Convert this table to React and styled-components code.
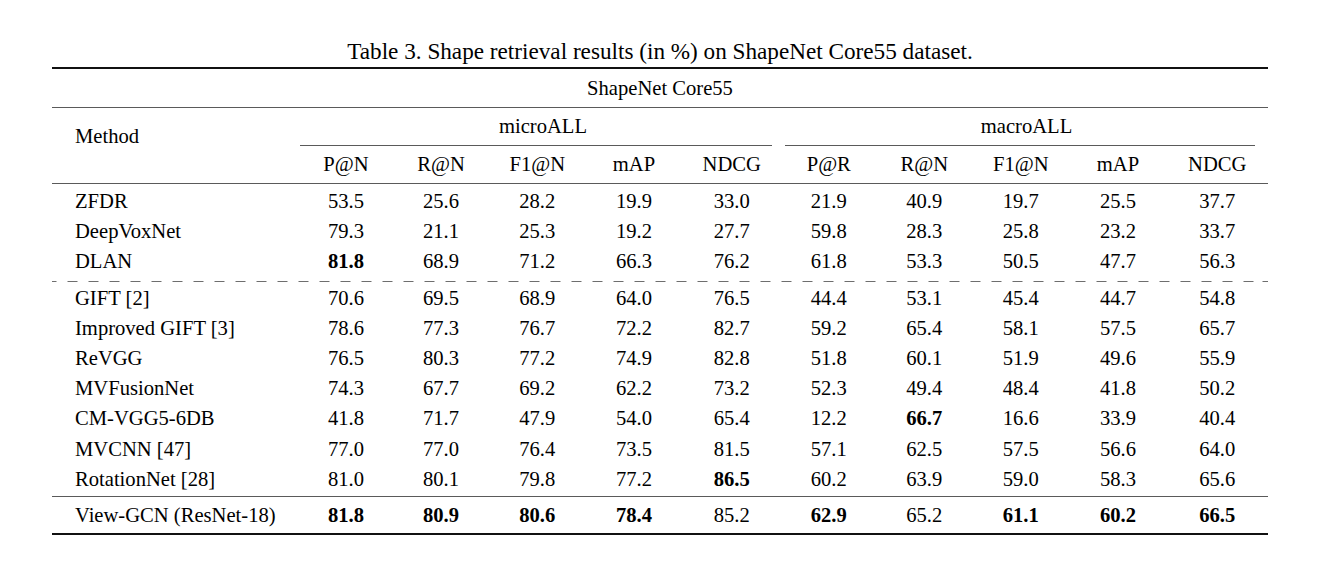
import React from "react";
import styled, { createGlobalStyle } from "styled-components";

const Global = createGlobalStyle`
  html, body { margin: 0; padding: 0; background: #fff; }
  body { font-family: "Liberation Serif", "Times New Roman", serif; color: #000; }
`;

const COLS = "247px 94px 96px 96.5px 97px 98.5px 95.5px 95.5px 97.5px 97px 101.5px";

const Page = styled.div`
  padding-left: 52px;
  width: 1216px;
`;

const Caption = styled.div`
  padding-top: 36px;
  height: 30px;
  line-height: 30px;
  margin-bottom: 1px;
  font-size: 23.2px;
  text-align: center;
  white-space: nowrap;
`;

const Rule = styled.div`
  height: ${(p) => (p.$thick ? 2 : 1)}px;
  background: ${(p) => (p.$thick ? "#111" : "#5a5a5a")};
`;

const DashRule = styled.div`
  height: 1px;
  margin-top: 0;
  background-image: repeating-linear-gradient(
    to right,
    #6e6e6e 0px,
    #6e6e6e 10.5px,
    transparent 10.5px,
    transparent 21px
  );
  background-position: -5.5px 0;
`;

const Title = styled.div`
  height: 38px;
  line-height: 38px;
  font-size: 20.6px;
  text-align: center;
`;

const Header = styled.div`
  display: grid;
  grid-template-columns: ${COLS};
  grid-template-rows: 37px 1px 37px;
  font-size: 20.6px;
`;

const MethodHead = styled.div`
  grid-column: 1;
  grid-row: 1 / 4;
  padding: 10px 0 0 23px;
  line-height: 36px;
`;

const GroupHead = styled.div`
  grid-row: 1;
  grid-column: ${(p) => p.$cols};
  line-height: 37px;
  text-align: center;
  transform: translateX(${(p) => p.$shift || 0}px);
`;

const CMid = styled.div`
  grid-row: 2;
  grid-column: ${(p) => p.$cols};
  margin: 0 ${(p) => p.$r}px 0 ${(p) => p.$l}px;
  background: #5a5a5a;
`;

const ColHead = styled.div`
  grid-row: 3;
  line-height: 36px;
  text-align: center;
`;

const Body = styled.div`
  padding: ${(p) => p.$pt}px 0 ${(p) => p.$pb}px;
`;

const Row = styled.div`
  display: grid;
  grid-template-columns: ${COLS};
  height: 30.2px;
  line-height: 30.2px;
  font-size: 20.6px;
`;

const MethodCell = styled.div`
  padding-left: 23px;
  white-space: nowrap;
`;

const Cell = styled.div`
  text-align: center;
  font-weight: ${(p) => (p.$bold ? 700 : 400)};
`;

const heads = ["P@N", "R@N", "F1@N", "mAP", "NDCG", "P@R", "R@N", "F1@N", "mAP", "NDCG"];

const group1 = [
  ["ZFDR", "53.5 25.6 28.2 19.9 33.0 21.9 40.9 19.7 25.5 37.7"],
  ["DeepVoxNet", "79.3 21.1 25.3 19.2 27.7 59.8 28.3 25.8 23.2 33.7"],
  ["DLAN", "81.8* 68.9 71.2 66.3 76.2 61.8 53.3 50.5 47.7 56.3"],
];

const group2 = [
  ["GIFT [2]", "70.6 69.5 68.9 64.0 76.5 44.4 53.1 45.4 44.7 54.8"],
  ["Improved GIFT [3]", "78.6 77.3 76.7 72.2 82.7 59.2 65.4 58.1 57.5 65.7"],
  ["ReVGG", "76.5 80.3 77.2 74.9 82.8 51.8 60.1 51.9 49.6 55.9"],
  ["MVFusionNet", "74.3 67.7 69.2 62.2 73.2 52.3 49.4 48.4 41.8 50.2"],
  ["CM-VGG5-6DB", "41.8 71.7 47.9 54.0 65.4 12.2 66.7* 16.6 33.9 40.4"],
  ["MVCNN [47]", "77.0 77.0 76.4 73.5 81.5 57.1 62.5 57.5 56.6 64.0"],
  ["RotationNet [28]", "81.0 80.1 79.8 77.2 86.5* 60.2 63.9 59.0 58.3 65.6"],
];

const group3 = [
  ["View-GCN (ResNet-18)", "81.8* 80.9* 80.6* 78.4* 85.2 62.9* 65.2 61.1* 60.2* 66.5*"],
];

function DataRow({ name, values }) {
  return (
    <Row>
      <MethodCell>{name}</MethodCell>
      {values.split(" ").map((v, i) => {
        const bold = v.endsWith("*");
        return (
          <Cell key={i} $bold={bold}>
            {bold ? v.slice(0, -1) : v}
          </Cell>
        );
      })}
    </Row>
  );
}

export default function App() {
  return (
    <>
      <Global />
      <Page>
        <Caption>Table 3. Shape retrieval results (in %) on ShapeNet Core55 dataset.</Caption>
        <Rule $thick />
        <Title>ShapeNet Core55</Title>
        <Rule />
        <Header>
          <MethodHead>Method</MethodHead>
          <GroupHead $cols="2 / 7" $shift={3}>microALL</GroupHead>
          <GroupHead $cols="7 / 12" $shift={2}>macroALL</GroupHead>
          <CMid $cols="2 / 7" $l={1} $r={9} />
          <CMid $cols="7 / 12" $l={4} $r={13} />
          {heads.map((h, i) => (
            <ColHead key={i} style={{ gridColumn: i + 2 }}>{h}</ColHead>
          ))}
        </Header>
        <Rule />
        <Body $pt={2} $pb={4}>
          {group1.map(([n, v]) => <DataRow key={n} name={n} values={v} />)}
        </Body>
        <DashRule />
        <Body $pt={1} $pb={2}>
          {group2.map(([n, v]) => <DataRow key={n} name={n} values={v} />)}
        </Body>
        <Rule />
        <Body $pt={3} $pb={3}>
          {group3.map(([n, v]) => <DataRow key={n} name={n} values={v} />)}
        </Body>
        <Rule $thick />
      </Page>
    </>
  );
}
